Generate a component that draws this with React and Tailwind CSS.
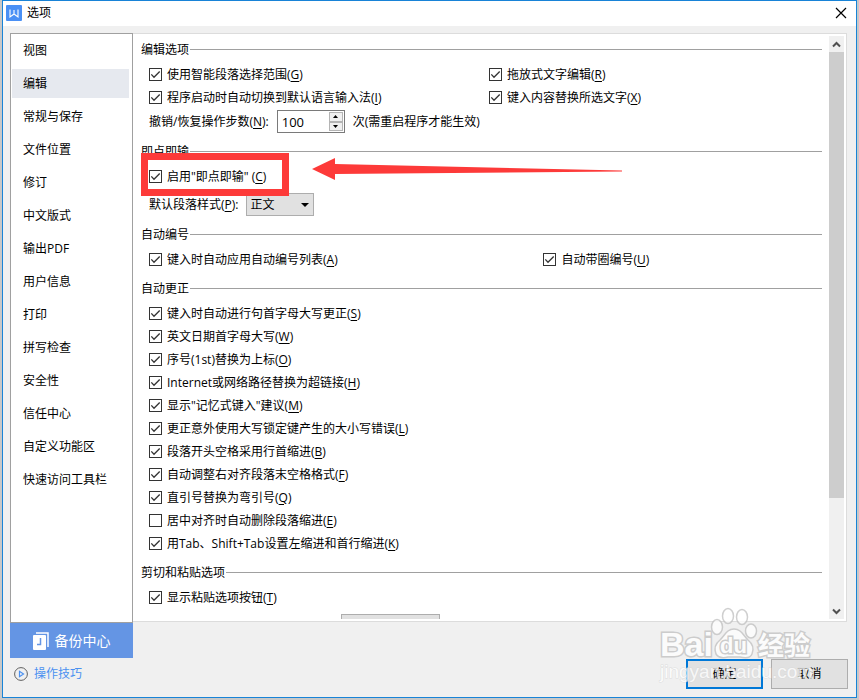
import React from "react";

const NAV = ["视图", "编辑", "常规与保存", "文件位置", "修订", "中文版式", "输出PDF", "用户信息", "打印", "拼写检查", "安全性", "信任中心", "自定义功能区", "快速访问工具栏"];

const CORRECTIONS = [
  ["键入时自动进行句首字母大写更正", "S", true],
  ["英文日期首字母大写", "W", true],
  ["序号(1st)替换为上标", "O", true],
  ["Internet或网络路径替换为超链接", "H", true],
  ["显示\"记忆式键入\"建议", "M", true],
  ["更正意外使用大写锁定键产生的大小写错误", "L", true],
  ["段落开头空格采用行首缩进", "B", true],
  ["自动调整右对齐段落末空格格式", "F", true],
  ["直引号替换为弯引号", "Q", true],
  ["居中对齐时自动删除段落缩进", "E", false],
  ["用Tab、Shift+Tab设置左缩进和首行缩进", "K", true],
];

function Key({ k }) {
  return <>(<span className="underline underline-offset-2">{k}</span>)</>;
}

function Check({ label, k, checked = true }) {
  return (
    <label className="flex h-[23px] items-center gap-[5px] whitespace-nowrap">
      <span className="grid size-[13px] shrink-0">
        <input type="checkbox" defaultChecked={checked} className="peer col-start-1 row-start-1 size-[13px] appearance-none border border-[#333333] bg-white" />
        <svg viewBox="0 0 13 13" className="pointer-events-none invisible col-start-1 row-start-1 size-[13px] peer-checked:visible" fill="none" stroke="#333333" strokeWidth="1.3">
          <path d="M2.3 6.4 5 9.2 10.7 3.5" />
        </svg>
      </span>
      <span>{label}<Key k={k} /></span>
    </label>
  );
}

function Section({ title, children }) {
  return (
    <section className="mb-1">
      <div className="flex h-[27px] items-center gap-px">
        <h2 className="whitespace-nowrap">{title}</h2>
        <div className="mr-[7px] h-px flex-1 bg-[#a0a0a0]" />
      </div>
      <div className="pl-2">{children}</div>
    </section>
  );
}

function Chevron({ up }) {
  return (
    <svg viewBox="0 0 9 7" className="h-[7px] w-[9px]" fill="none" stroke="#505050" strokeWidth="2">
      <path d={up ? "M1 5.5 4.5 2 8 5.5" : "M1 1.5 4.5 5 8 1.5"} />
    </svg>
  );
}

function Watermark() {
  return (
    <div aria-hidden="true" className="pointer-events-none absolute right-9 bottom-2 h-[84px] w-[164px] opacity-75">
      <svg viewBox="0 0 164 84" className="h-full w-full" fill="#ffffff" stroke="#c0c0c0" strokeWidth="1.5">
        <ellipse cx="61" cy="22" rx="5.5" ry="7.5" />
        <ellipse cx="72" cy="11" rx="5.5" ry="7.5" />
        <ellipse cx="86" cy="12" rx="5.5" ry="7.5" />
        <ellipse cx="95" cy="26" rx="5.5" ry="7" />
        <path d="M78 24c-7 0-9 6-14 11-5 4-6 9-4 14 3 5 8 4 12 3h12c4 1 10 2 12-3 2-5 1-10-4-14-5-5-7-11-14-11Z" />
        <g fontFamily="Liberation Sans, Noto Sans CJK SC, sans-serif" fontWeight="700" paintOrder="stroke" strokeWidth="3">
          <text x="4" y="51" fontSize="34">Bai</text>
          <text x="64" y="48" fontSize="22">du</text>
          <text x="102" y="50" fontSize="26">经验</text>
        </g>
        <text x="4" y="73" fontSize="19" fontFamily="Liberation Sans, sans-serif" strokeWidth="1" stroke="#d8d8d8" paintOrder="stroke">jingyan.baidu.com</text>
      </svg>
    </div>
  );
}

export default function App() {
  return (
    <div className="h-screen overflow-hidden bg-[#c8c8c8] pr-[2px] pb-[2px] pl-[2px] font-['Open_Sans','Noto_Sans_CJK_SC',sans-serif] text-[12px] leading-4 text-black">
      <div className="relative flex h-full flex-col border border-[#1883d7] bg-[#f0f0f0]">
        <header className="flex h-[25px] shrink-0 items-center gap-[5px] bg-white pr-[9px] pb-px pl-[3px]">
          <svg viewBox="0 0 16 16" className="size-4">
            <rect width="16" height="16" rx="1" fill="#4a90f5" />
            <path d="M4 4.500v7.500l4-3 4 3V4.500M8 5v3.500" fill="none" stroke="#ffffff" strokeWidth="1.100" />
          </svg>
          <h1 className="flex-1">选项</h1>
          <button aria-label="关闭" className="grid size-3 place-items-center">
            <svg viewBox="0 0 12 12" className="size-3" stroke="#000000" strokeWidth="1.200">
              <path d="M1 1 11 11M11 1 1 11" />
            </svg>
          </button>
        </header>

        <main className="flex min-h-0 flex-1 pt-[7px] pr-[9px] pl-[7px]">
          <aside className="flex w-[123px] shrink-0 flex-col">
            <nav className="flex-1 border border-[#a0a0a0] bg-white pt-[2px] pr-[3px] pl-px">
              {NAV.map((item) => (
                <button
                  key={item}
                  className={`mb-1 flex h-[29px] w-full items-center pl-[11px] text-left whitespace-nowrap ${item === "编辑" ? "bg-[#e6e9ef]" : "bg-white"}`}
                >
                  {item}
                </button>
              ))}
            </nav>
            <button className="flex h-[35px] shrink-0 items-center justify-center gap-[6px] bg-[#6495e4] text-[14px] text-white">
              <svg viewBox="0 0 16 18" className="h-[18px] w-4">
                <path d="M3 1h12v14" fill="none" stroke="#ffffff" strokeWidth="1.500" />
                <rect y="3" width="13" height="15" rx="1" fill="#ffffff" />
                <path d="M7.500 6v6.500H4" fill="none" stroke="#6495e4" strokeWidth="1.500" />
              </svg>
              备份中心
            </button>
          </aside>

          <div className="mb-9 flex min-w-0 flex-1 border border-l-0 border-[#dcdcdc] bg-white pt-[2px] pr-[2px] pb-[2px]">
            <div className="min-w-0 flex-1 overflow-hidden pl-2">
              <Section title="编辑选项">
                <div className="grid grid-cols-2">
                  <Check label="使用智能段落选择范围" k="G" />
                  <Check label="拖放式文字编辑" k="R" />
                  <Check label="程序启动时自动切换到默认语言输入法" k="I" />
                  <Check label="键入内容替换所选文字" k="X" />
                </div>
                <div className="flex h-[25px] items-center gap-2 whitespace-nowrap">
                  <label htmlFor="steps">撤销/恢复操作步数<Key k="N" />:</label>
                  <div className="flex h-[23px] w-[68px] border border-[#7a7a7a] bg-white p-px">
                    <input id="steps" defaultValue="100" className="w-0 flex-1 pl-[3px] text-[13px] outline-none" />
                    <div className="flex w-[14px] flex-col">
                      <button aria-label="增加" className="grid flex-1 place-items-center border border-[#b4b4b4] bg-[#f0f0f0]">
                        <svg viewBox="0 0 5 3" className="h-[3px] w-[5px]"><path d="M0 3 2.500 0 5 3Z" /></svg>
                      </button>
                      <button aria-label="减少" className="grid flex-1 place-items-center border border-[#b4b4b4] bg-[#f0f0f0]">
                        <svg viewBox="0 0 5 3" className="h-[3px] w-[5px]"><path d="M0 0 2.500 3 5 0Z" /></svg>
                      </button>
                    </div>
                  </div>
                  <span>次(需重启程序才能生效)</span>
                </div>
              </Section>

              <Section title="即点即输">
                <div className="relative">
                  <Check label={'启用"即点即输" '} k="C" />
                  <div className="pointer-events-none absolute -top-3 -left-2 h-[43px] w-[148px] border-[7px] border-[#fd3a39]" />
                  <svg viewBox="0 0 310 22" className="pointer-events-none absolute -top-[7px] left-[163px] h-[22px] w-[310px]">
                    <path d="M0 11 23 0V6L310 12.500V13.500L23 16V22Z" fill="#fd3a39" />
                  </svg>
                </div>
                <div className="mt-1 flex h-[25px] items-center gap-2 whitespace-nowrap">
                  <label htmlFor="style">默认段落样式<Key k="P" />:</label>
                  <div className="grid items-center">
                    <select id="style" className="col-start-1 row-start-1 h-[23px] w-[68px] appearance-none border border-[#adadad] bg-[#e1e1e1] pl-[3px]">
                      <option>正文</option>
                    </select>
                    <svg viewBox="0 0 8 4" className="pointer-events-none col-start-1 row-start-1 mr-[5px] h-1 w-2 justify-self-end"><path d="M0 0H8L4 4Z" /></svg>
                  </div>
                </div>
              </Section>

              <Section title="自动编号">
                <div className="grid grid-cols-[58%_42%]">
                  <Check label="键入时自动应用自动编号列表" k="A" />
                  <Check label="自动带圈编号" k="U" />
                </div>
              </Section>

              <Section title="自动更正">
                {CORRECTIONS.map(([label, k, checked]) => (
                  <Check key={k} label={label} k={k} checked={checked} />
                ))}
              </Section>

              <Section title="剪切和粘贴选项">
                <Check label="显示粘贴选项按钮" k="T" />
                <button aria-label="设置" className="mt-[5px] ml-48 block h-6 w-[99px] border border-[#adadad] bg-[#e1e1e1]" />
              </Section>
            </div>

            <div className="flex w-[15px] shrink-0 flex-col bg-[#f0f0f0]">
              <button aria-label="向上滚动" className="grid h-4 place-items-center"><Chevron up /></button>
              <div className="flex-1">
                <div className="h-[81%] bg-[#cdcdcd]" />
              </div>
              <button aria-label="向下滚动" className="grid h-4 place-items-center"><Chevron /></button>
            </div>
          </div>
        </main>

        <footer className="flex h-[39px] shrink-0 items-start justify-between pt-px pr-2 pl-[11px]">
          <a href="#tips" className="mt-[7px] flex items-center gap-[6px] text-[#4a90f0]">
            <svg viewBox="0 0 14 14" className="size-[14px]" fill="none">
              <circle cx="7" cy="7" r="6.400" stroke="#606060" />
              <path d="M5.500 4.300V9.700L9.500 7Z" stroke="#4a90f0" strokeWidth="1.200" />
            </svg>
            操作技巧
          </a>
          <div className="flex gap-2">
            <button className="h-[30px] w-[77px] border-2 border-[#0078d7] bg-[#e1e1e1]">确定</button>
            <button className="h-[30px] w-[77px] border border-[#adadad] bg-[#e1e1e1]">取消</button>
          </div>
        </footer>
        <Watermark />
      </div>
    </div>
  );
}
